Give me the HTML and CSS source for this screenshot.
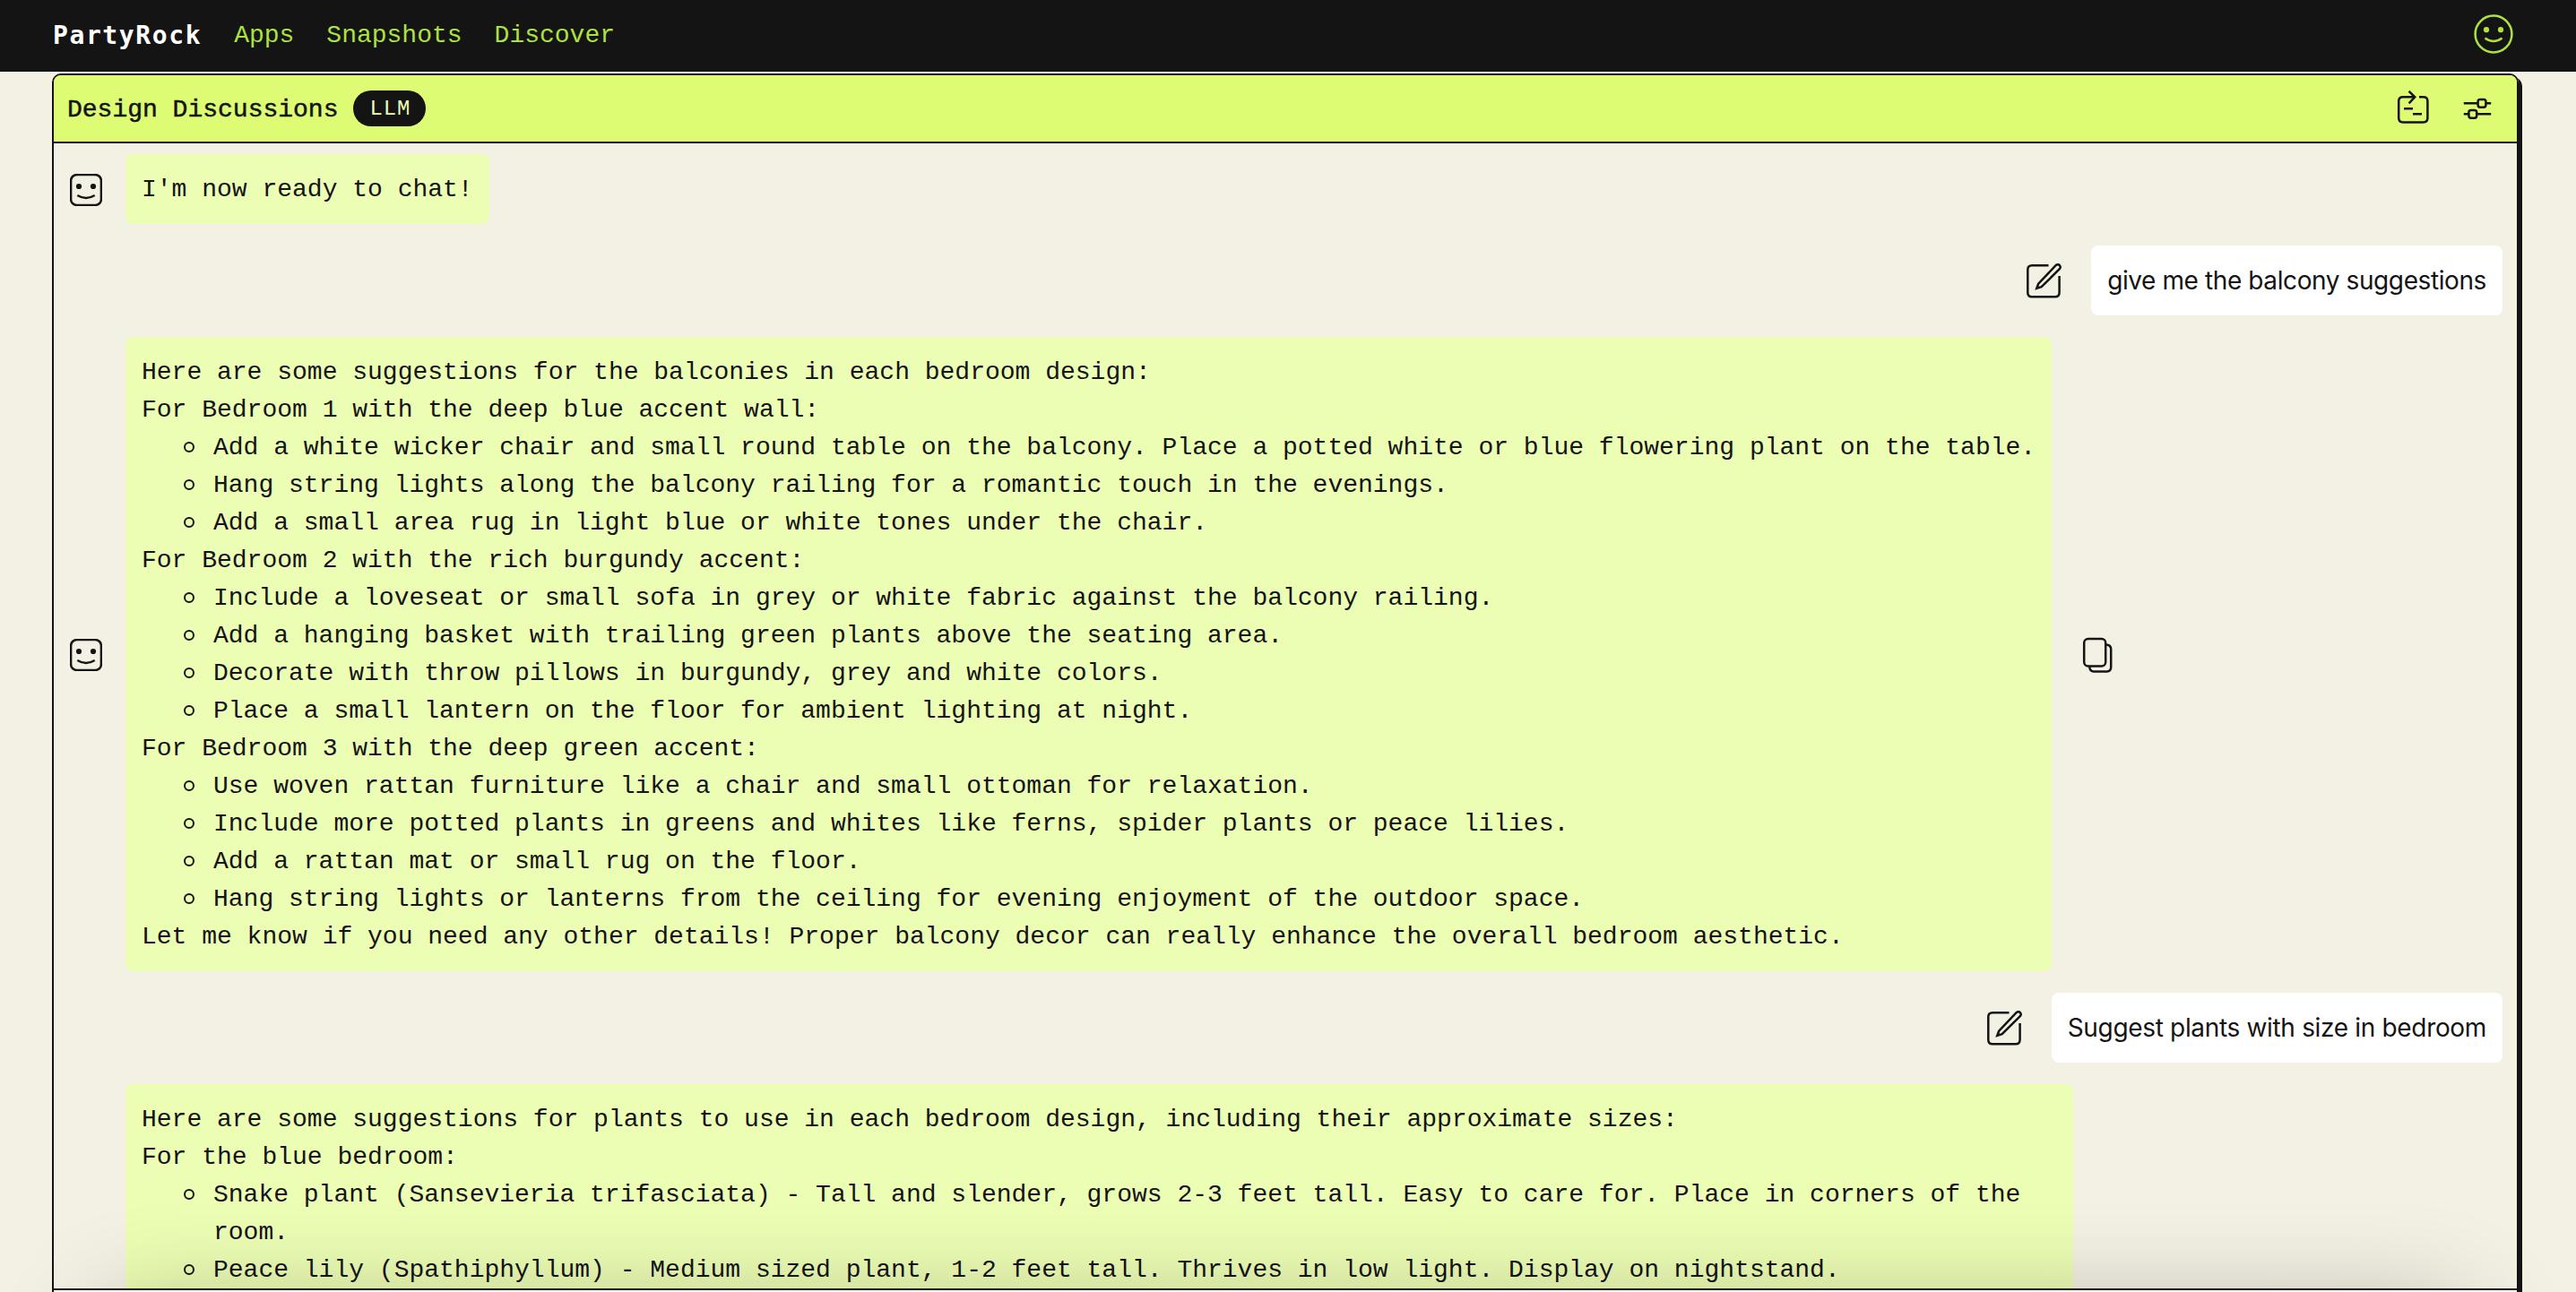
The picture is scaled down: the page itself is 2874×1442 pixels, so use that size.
FILE: index.html
```html
<!DOCTYPE html>
<html lang="en">

    <head>
        <meta charset="UTF-8">
        <meta name="viewport" content="width=device-width, initial-scale=1.0">
        <title>PartyRock</title>
        <link rel="stylesheet" href="styles.css">
    </head>

    <body>
        <header class="navbar">
            <nav class="nav-links">
                <a class="logo">PartyRock</a>
                <a>Apps</a>
                <a>Snapshots</a>
                <a>Discover</a>
            </nav>
            <svg class="profile-icon" viewBox="0 0 44 44">
                <circle cx="22" cy="22" r="20.4" />
                <path d="M12.5 26.5Q22 33.5 31.5 26.5" />
                <circle class="fill" cx="14" cy="17.2" r="3.1" />
                <circle class="fill" cx="30" cy="17.2" r="3.1" />
            </svg>
        </header>

        <main class="widget">
            <div class="widget-header">
                <h2>Design Discussions</h2>
                <span class="badge">LLM</span>
                <div class="widget-actions">
                    <svg class="icon" viewBox="13 11 40 40">
                        <path d="M34 18.3H21Q16.2 18.3 16.2 23V41.8Q16.2 46.5 21 46.5H43.6Q48.4 46.5 48.4 41.8V23Q48.4 18.3 43.6 18.3H39" />
                        <path d="M27.6 11.8L34.2 18.3L27.6 25.3M22 31.2H32M32 37.2H42" />
                    </svg>
                    <svg class="icon" viewBox="84 11 40 40">
                        <path d="M88.8 25.2H104.5M113.5 25.2H119.2M88.8 37.2H94.3M103.5 37.2H119.2" />
                        <rect x="104.6" y="20.9" width="8.8" height="8.8" rx="2.4" />
                        <rect x="94.4" y="32.9" width="8.8" height="8.8" rx="2.4" />
                    </svg>
                </div>
            </div>

            <div class="chat">
                <div class="message bot">
                    <svg class="avatar" viewBox="0 0 36 36">
                        <rect x="1.1" y="1.1" width="33.8" height="33.8" rx="6.5" />
                        <path d="M8.3 24Q18 30 27.7 24" />
                        <circle class="fill" cx="10" cy="14" r="3.1" />
                        <circle class="fill" cx="26" cy="14" r="3.1" />
                    </svg>
                    <div class="bubble">
                        <p>I'm now ready to chat!</p>
                    </div>
                </div>

                <div class="message user">
                    <svg class="icon" viewBox="10 10 40 40">
                        <path d="M35.5 12.3H17Q12.3 12.3 12.3 17V42.4Q12.3 47.2 17 47.2H42.8Q47.6 47.2 47.6 42.4V24" />
                        <path d="M22.3 37.8L24.2 32.6L43.6 12.2Q45.6 10.3 47.8 12Q49.6 14 47.8 16.2L27.6 36.2Z" />
                    </svg>
                    <div class="bubble">
                        <p class="first-question">give me the balcony suggestions</p>
                    </div>
                </div>

                <div class="message bot">
                    <svg class="avatar" viewBox="0 0 36 36">
                        <rect x="1.1" y="1.1" width="33.8" height="33.8" rx="6.5" />
                        <path d="M8.3 24Q18 30 27.7 24" />
                        <circle class="fill" cx="10" cy="14" r="3.1" />
                        <circle class="fill" cx="26" cy="14" r="3.1" />
                    </svg>
                    <div class="bubble">
                        <p>Here are some suggestions for the balconies in each bedroom design:</p>
                        <p>For Bedroom 1 with the deep blue accent wall:</p>
                        <ul>
                            <li>Add a white wicker chair and small round table on the balcony. Place a potted white or blue flowering plant on the table.</li>
                            <li>Hang string lights along the balcony railing for a romantic touch in the evenings.</li>
                            <li>Add a small area rug in light blue or white tones under the chair.</li>
                        </ul>
                        <p>For Bedroom 2 with the rich burgundy accent:</p>
                        <ul>
                            <li>Include a loveseat or small sofa in grey or white fabric against the balcony railing.</li>
                            <li>Add a hanging basket with trailing green plants above the seating area.</li>
                            <li>Decorate with throw pillows in burgundy, grey and white colors.</li>
                            <li>Place a small lantern on the floor for ambient lighting at night.</li>
                        </ul>
                        <p>For Bedroom 3 with the deep green accent:</p>
                        <ul>
                            <li>Use woven rattan furniture like a chair and small ottoman for relaxation.</li>
                            <li>Include more potted plants in greens and whites like ferns, spider plants or peace lilies.</li>
                            <li>Add a rattan mat or small rug on the floor.</li>
                            <li>Hang string lights or lanterns from the ceiling for evening enjoyment of the outdoor space.</li>
                        </ul>
                        <p>Let me know if you need any other details! Proper balcony decor can really enhance the overall bedroom aesthetic.</p>
                    </div>
                    <svg class="icon copy" viewBox="0 0 40 40">
                        <rect x="5.2" y="2" width="24" height="30.5" rx="4.5" />
                        <path d="M29.2 8.4Q35.2 8.4 35.2 13.6V33.5Q35.2 38.4 30.6 38.4H16Q11.4 38.4 11.2 32.5" />
                    </svg>
                </div>

                <div class="message user">
                    <svg class="icon" viewBox="10 10 40 40">
                        <path d="M35.5 12.3H17Q12.3 12.3 12.3 17V42.4Q12.3 47.2 17 47.2H42.8Q47.6 47.2 47.6 42.4V24" />
                        <path d="M22.3 37.8L24.2 32.6L43.6 12.2Q45.6 10.3 47.8 12Q49.6 14 47.8 16.2L27.6 36.2Z" />
                    </svg>
                    <div class="bubble">
                        <p class="second-question">Suggest plants with size in bedroom</p>
                    </div>
                </div>

                <div class="message bot last">
                    <div class="bubble">
                        <p>Here are some suggestions for plants to use in each bedroom design, including their approximate sizes:</p>
                        <p>For the blue bedroom:</p>
                        <ul>
                            <li>Snake plant (Sansevieria trifasciata) - Tall and slender, grows 2-3 feet tall. Easy to care for. Place in corners of the room.</li>
                            <li>Peace lily (Spathiphyllum) - Medium sized plant, 1-2 feet tall. Thrives in low light. Display on nightstand.</li>
                        </ul>
                    </div>
                </div>
            </div>

            <div class="chat-footer"></div>
        </main>
    </body>

</html>
```
FILE: styles.css
```css
* {
    box-sizing: border-box;
}

html {
    overflow: hidden;
}

body {
    margin: 0;
    height: 1442px;
    overflow: hidden;
    background-color: #f3f0e4;
    color: #141414;
    font-family: "Liberation Mono", monospace;
    font-size: 28px;
    line-height: 42px;
}

h2,
p,
ul {
    margin: 0;
    padding: 0;
}

svg {
    display: block;
    flex: none;
    fill: none;
    stroke: #141414;
    stroke-width: 2.5;
}

.fill {
    fill: #141414;
    stroke: none;
}

/* top bar */
.navbar {
    display: flex;
    justify-content: space-between;
    align-items: center;
    height: 80px;
    padding: 0 70px 4px 58px;
    background-color: #141414;
}

.nav-links {
    display: flex;
    gap: 36px;
    padding: 3px 0 0 1px;
    color: #aee23e;
}

.logo {
    color: white;
    font-family: "DejaVu Sans Mono", monospace;
    font-size: 28px;
    font-weight: bold;
    letter-spacing: 1.6px;
}

.profile-icon {
    width: 44px;
    height: 44px;
    stroke: #aee23e;
}

.profile-icon .fill {
    fill: #aee23e;
    stroke: none;
}

/* chat widget */
.widget {
    width: 2752px;
    margin: 2px 0 0 58px;
    border: 2px solid #141414;
    border-radius: 10px;
    box-shadow: 4px 4px 0 #141414;
}

.widget-header {
    display: flex;
    align-items: center;
    height: 76px;
    padding: 0 24px 0 15px;
    background-color: #ddfc74;
    border-bottom: 2px solid #141414;
    border-radius: 8px 8px 0 0;
}

h2 {
    padding-top: 3px;
    font-size: 28px;
    font-weight: normal;
    -webkit-text-stroke: 0.5px #141414;
}

.badge {
    height: 40px;
    margin-left: 17px;
    padding: 1px 17px 0 18px;
    background-color: #141414;
    border-radius: 20px;
    color: #ecfdb4;
    font-size: 24px;
    line-height: 40px;
    letter-spacing: 0.9px;
}

.widget-actions {
    display: flex;
    gap: 31px;
    margin-left: auto;
}

.icon {
    width: 40px;
    height: 40px;
}

.chat {
    display: flex;
    flex-direction: column;
    gap: 24px;
    height: 1278px;
    padding: 12px 16px 0 18px;
    overflow: hidden;
}

.message {
    display: flex;
    align-items: center;
    flex: none;
}

.avatar {
    width: 36px;
    height: 36px;
    margin: 2px 26px 0 0;
}

.bubble {
    max-width: 2173px;
    padding: 19px 18px 17px;
    background-color: #ecfdb4;
    border-radius: 8px;
}

.copy {
    margin: 1px 0 0 31px;
}

.user {
    justify-content: flex-end;
    font-family: Inter, sans-serif;
}

.user .bubble {
    margin-left: 33px;
    padding: 18px;
    background-color: white;
}

.user .icon {
    margin-top: 2px;
}

.first-question {
    letter-spacing: -0.4px;
}

.second-question {
    letter-spacing: -0.33px;
}

.last {
    padding-left: 62px;
}

li {
    display: flex;
    padding-left: 47px;
}

li::before {
    content: "";
    box-sizing: border-box;
    flex: none;
    width: 12px;
    height: 12px;
    margin: 14px 21px 0 0;
    border: 2px solid #141414;
    border-radius: 50%;
}

/* relative so the shadow falls over the messages */
.chat-footer {
    position: relative;
    height: 300px;
    background-color: #f7f7f0;
    border-top: 2px solid #141414;
    box-shadow: 0 -30px 120px -60px rgba(0, 0, 0, 0.3);
}
```
